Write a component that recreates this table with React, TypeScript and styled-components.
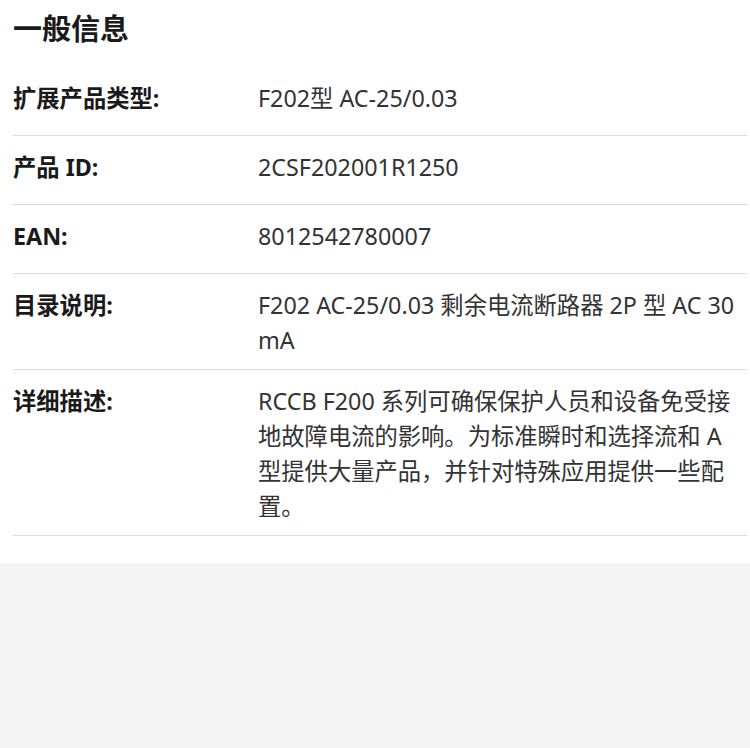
import React from "react";
import styled, { createGlobalStyle } from "styled-components";

const GlobalStyle = createGlobalStyle`
  html, body {
    margin: 0;
    padding: 0;
    background: #f5f5f5;
  }
  body {
    font-family: "Noto Sans", "Noto Sans CJK SC", sans-serif;
    -webkit-font-smoothing: antialiased;
  }
`;

const Section = styled.section`
  background: #ffffff;
  padding: 8px 3px 27px 13px;
`;

const Heading = styled.h2`
  margin: 0 0 17px;
  font-size: 29px;
  line-height: 42px;
  font-weight: 700;
  color: #1a1a1a;
`;

const List = styled.dl`
  margin: 0;
`;

const Row = styled.div`
  display: grid;
  grid-template-columns: 245px 1fr;
  box-sizing: border-box;
  min-height: 69px;
  padding: 14px 0 11px;
  border-bottom: 1px solid #dcdcdc;
`;

const Label = styled.dt`
  margin: 0;
  font-size: 23.3px;
  line-height: 35px;
  font-weight: 700;
  color: #1a1a1a;
`;

const Value = styled.dd`
  margin: 0;
  padding-right: 2px;
  font-size: 23.3px;
  line-height: 35px;
  font-weight: 400;
  color: #333333;
`;

const rows: { label: string; value: string }[] = [
  { label: "扩展产品类型:", value: "F202型 AC-25/0.03" },
  { label: "产品 ID:", value: "2CSF202001R1250" },
  { label: "EAN:", value: "8012542780007" },
  { label: "目录说明:", value: "F202 AC-25/0.03 剩余电流断路器 2P 型 AC 30 mA" },
  {
    label: "详细描述:",
    value:
      "RCCB F200 系列可确保保护人员和设备免受接地故障电流的影响。为标准瞬时和选择流和 A 型提供大量产品，并针对特殊应用提供一些配置。",
  },
];

export default function App() {
  return (
    <>
      <GlobalStyle />
      <Section>
        <Heading>一般信息</Heading>
        <List>
          {rows.map((r) => (
            <Row key={r.label}>
              <Label>{r.label}</Label>
              <Value>{r.value}</Value>
            </Row>
          ))}
        </List>
      </Section>
    </>
  );
}
